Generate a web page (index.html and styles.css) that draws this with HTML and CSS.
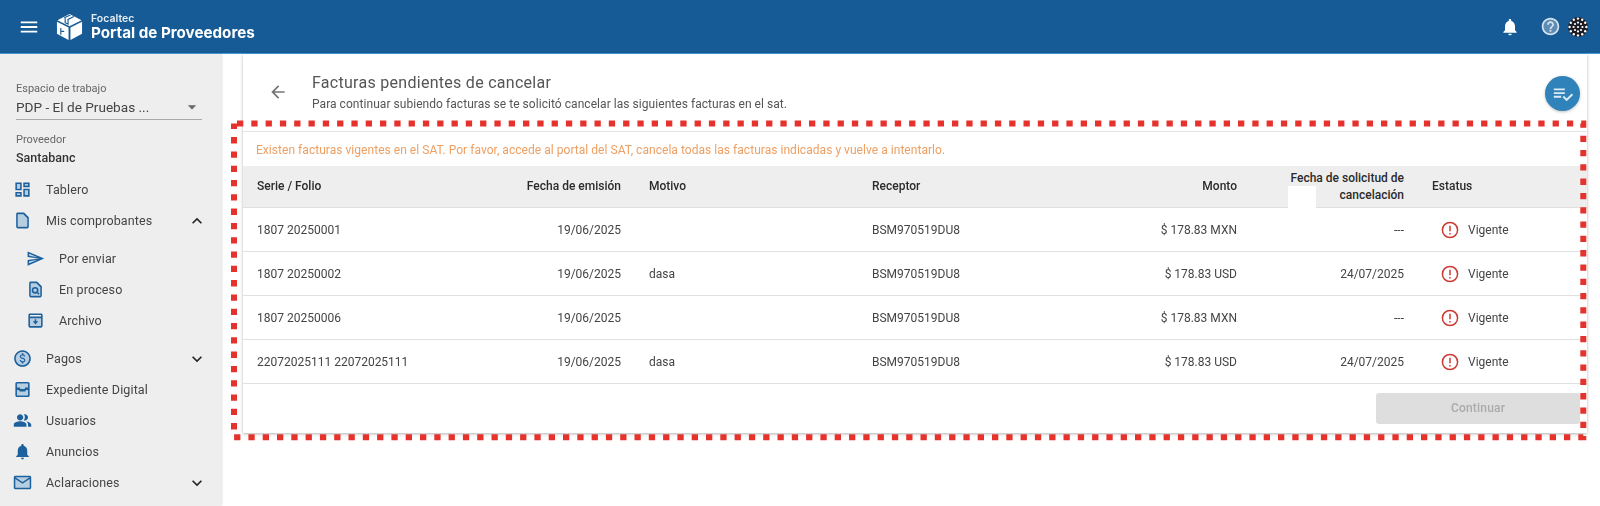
FILE: index.html
```html
<!DOCTYPE html>
<html lang="es">

<head>
    <meta charset="UTF-8">
    <title>Portal de Proveedores</title>
    <link rel="stylesheet" href="styles.css">
</head>

<body>
    <div class="page">
        <header class="topbar">
            <svg class="ico24 menuBtn" viewBox="0 0 24 24"><path d="M3 18h18v-2H3v2zm0-5h18v-2H3v2zm0-7v2h18V6H3z"/></svg>
            <svg class="cube" viewBox="0 0 28 28">
                <path d="M14 0.500 26.500 7 14 13.200 1.500 7z"/>
                <path d="M1 8.600 13 14.600V27.500L1 21z"/>
                <path d="M27 8.600 15 14.600V27.500L27 21z"/>
                <path class="cubeCut" d="M8.500 4.400 15 1.600M9.500 4.800v4.700l3 1.400V6.200l6-3"/>
                <path class="cubeCut" d="M5 15v7M5 18.500h3.500"/>
            </svg>
            <div class="brand">
                <span class="brandTop">Focaltec</span>
                <span class="brandName">Portal de Proveedores</span>
            </div>
            <div class="topIcons">
                <svg class="ico24 bell" viewBox="0 0 24 24"><path d="M12 22c1.100 0 2-.9 2-2h-4c0 1.100.9 2 2 2zm6-6v-5c0-3.070-1.630-5.640-4.500-6.320V4c0-.83-.67-1.500-1.500-1.500s-1.500.67-1.500 1.500v.68C7.640 5.360 6 7.920 6 11v5l-2 2v1h16v-1l-2-2z"/></svg>
                <svg class="ico24 help" viewBox="0 0 24 24"><circle class="helpFill" cx="12" cy="12" r="9"/><path d="M11 18h2v-2h-2v2zm1-16C6.480 2 2 6.480 2 12s4.480 10 10 10 10-4.480 10-10S17.520 2 12 2zm0 18c-4.410 0-8-3.590-8-8s3.590-8 8-8 8 3.590 8 8-3.590 8-8 8zm0-14c-2.210 0-4 1.790-4 4h2c0-1.100.9-2 2-2s2 .9 2 2c0 2-3 1.750-3 5h2c0-2.250 3-2.500 3-5 0-2.210-1.790-4-4-4z"/></svg>
                <svg class="avatar" viewBox="0 0 20 20">
                    <circle cx="10" cy="10" r="10" fill="#1c1c24"/>
                    <g fill="#fff">
                        <circle cx="10" cy="1.600" r="1.200"/><circle cx="14.200" cy="2.800" r="1.200"/><circle cx="17.200" cy="5.800" r="1.200"/><circle cx="18.400" cy="10" r="1.200"/><circle cx="17.200" cy="14.200" r="1.200"/><circle cx="14.200" cy="17.200" r="1.200"/><circle cx="10" cy="18.400" r="1.200"/><circle cx="5.800" cy="17.200" r="1.200"/><circle cx="2.800" cy="14.200" r="1.200"/><circle cx="1.600" cy="10" r="1.200"/><circle cx="2.800" cy="5.800" r="1.200"/><circle cx="5.800" cy="2.800" r="1.200"/>
                        <circle cx="7" cy="7" r="1.100"/><circle cx="10" cy="5.600" r="1.100"/><circle cx="13" cy="7" r="1.100"/><circle cx="14.400" cy="10" r="1.100"/><circle cx="13" cy="13" r="1.100"/><circle cx="10" cy="14.400" r="1.100"/><circle cx="7" cy="13" r="1.100"/><circle cx="5.600" cy="10" r="1.100"/><circle cx="10" cy="10" r="1.100"/>
                    </g>
                </svg>
            </div>
        </header>

        <div class="main">
            <aside class="sidebar">
                <div class="workspace">
                    <label class="fieldLabel">Espacio de trabajo</label>
                    <div class="selectBox">
                        <span>PDP - El de Pruebas ...</span>
                        <svg class="ico24 caret" viewBox="0 0 24 24"><path d="M7 10l5 5 5-5z"/></svg>
                    </div>
                    <label class="fieldLabel provLabel">Proveedor</label>
                    <div class="provName">Santabanc</div>
                </div>

                <ul class="nav">
                    <li>
                        <svg class="navIco" viewBox="0 0 24 24"><path class="tone" d="M5 5h4v6H5zM15 5h4v2h-4zM15 13h4v6h-4zM5 17h4v2H5z"/><path d="M19 5v2h-4V5h4M9 5v6H5V5h4m10 8v6h-4v-6h4M9 17v2H5v-2h4M21 3h-8v6h8V3zM11 3H3v10h8V3zm10 8h-8v10h8V11zm-10 4H3v6h8v-6z"/></svg>
                        <span>Tablero</span>
                    </li>
                    <li>
                        <svg class="navIco" viewBox="0 0 24 24"><path class="tone" d="M14 4H6v16h12V8z"/><path d="M14 2H6c-1.100 0-2 .9-2 2v16c0 1.100.9 2 2 2h12c1.100 0 2-.9 2-2V8l-6-6zm4 18H6V4h7l5 5v11z"/></svg>
                        <span>Mis comprobantes</span>
                        <svg class="ico24 chev" viewBox="0 0 24 24"><path d="M12 8l-6 6 1.410 1.410L12 10.830l4.590 4.580L18 14z"/></svg>
                    </li>
                    <li class="sub first">
                        <svg class="navIco" viewBox="0 0 24 24"><path class="tone" d="M4 7v3.500l9 1.500-9 1.500V17l14-5z"/><path d="M2.010 21 23 12 2.010 3 2 10l15 2-15 2zM4 6.100 17.900 12 4 17.900v-2.400l13.300-2.500v-2L4 8.500z"/></svg>
                        <span>Por enviar</span>
                    </li>
                    <li class="sub">
                        <svg class="navIco" viewBox="0 0 24 24"><path class="tone" d="M6 4h8l4 4v12H6z"/><path d="M14 2H6c-1.100 0-2 .9-2 2v16c0 1.100.9 2 2 2h12c1.100 0 2-.9 2-2V8l-6-6zm4 18H6V4h7l5 5v11z"/><circle class="ringLine" cx="11.500" cy="13" r="3.300"/><path class="ringLine" d="m14 15.500 2.500 2.500"/></svg>
                        <span>En proceso</span>
                    </li>
                    <li class="sub">
                        <svg class="navIco" viewBox="0 0 24 24"><path class="tone" d="M4 8h16v12H4z"/><path d="M5 3h14c1.100 0 2 .9 2 2v14c0 1.100-.9 2-2 2H5c-1.100 0-2-.9-2-2V5c0-1.100.9-2 2-2zm0 2v2h14V5H5zm0 4v10h14V9H5z"/><path d="M11 10.500h2V13h2.500L12 17l-3.500-4H11z"/></svg>
                        <span>Archivo</span>
                    </li>
                    <li class="gapTop">
                        <svg class="navIco" viewBox="0 0 24 24"><circle class="tone" cx="12" cy="12" r="10"/><path d="M12 1.500C6.200 1.500 1.500 6.200 1.500 12S6.200 22.500 12 22.500 22.500 17.800 22.500 12 17.800 1.500 12 1.500zm0 19c-4.700 0-8.500-3.800-8.500-8.500S7.300 3.500 12 3.500s8.500 3.800 8.500 8.500-3.800 8.500-8.500 8.500z"/><path d="M12.300 11c-1.700-.5-2.200-.9-2.200-1.600 0-.8.700-1.300 1.900-1.300s1.800.6 1.800 1.500h1.600c0-1.200-.8-2.300-2.300-2.700V5.500h-2v1.400c-1.400.3-2.500 1.200-2.500 2.600 0 1.700 1.400 2.500 3.400 3 1.800.4 2.200 1 2.200 1.700 0 .5-.4 1.300-2 1.300-1.500 0-2.100-.7-2.100-1.500H8.500c.1 1.600 1.300 2.500 2.600 2.800v1.400h2v-1.400c1.400-.3 2.500-1.100 2.500-2.600 0-2-1.700-2.700-3.300-3.200z"/></svg>
                        <span>Pagos</span>
                        <svg class="ico24 chev" viewBox="0 0 24 24"><path d="M16.590 8.590 12 13.170 7.410 8.590 6 10l6 6 6-6z"/></svg>
                    </li>
                    <li>
                        <svg class="navIco" viewBox="0 0 24 24"><path class="tone" d="M4 4h16v6H4zM4 14h16v6H4z"/><path d="M5 2.500h14c1.100 0 2 .9 2 2v15c0 1.100-.9 2-2 2H5c-1.100 0-2-.9-2-2v-15c0-1.100.9-2 2-2zm0 2v5h3.500l1 2h5l1-2H19v-5H5zm0 8v7h14v-7h-2.500l-1 2h-7l-1-2H5zM3 11h18v2H3z"/></svg>
                        <span>Expediente Digital</span>
                    </li>
                    <li>
                        <svg class="navIco" viewBox="0 0 24 24"><path d="M16.670 13.130C18.040 14.060 19 15.320 19 17v3h4v-3c0-2.180-3.570-3.470-6.330-3.870zM15 12c2.210 0 4-1.790 4-4s-1.790-4-4-4c-.47 0-.91.100-1.330.240C14.500 5.270 15 6.580 15 8s-.5 2.730-1.330 3.760c.42.140.86.240 1.330.240zM9 12c2.210 0 4-1.790 4-4s-1.790-4-4-4-4 1.790-4 4 1.790 4 4 4zM9 13c-2.670 0-8 1.340-8 4v3h16v-3c0-2.660-5.330-4-8-4z"/></svg>
                        <span>Usuarios</span>
                    </li>
                    <li>
                        <svg class="navIco" viewBox="0 0 24 24"><path d="M12 22c1.100 0 2-.9 2-2h-4c0 1.100.9 2 2 2zm6-6v-5c0-3.070-1.630-5.640-4.500-6.320V4c0-.83-.67-1.500-1.500-1.500s-1.500.67-1.500 1.500v.68C7.640 5.360 6 7.920 6 11v5l-2 2v1h16v-1l-2-2z"/></svg>
                        <span>Anuncios</span>
                    </li>
                    <li>
                        <svg class="navIco" viewBox="0 0 24 24"><path class="tone" d="M3 5h18v14H3z"/><path d="M21 3.500H3c-1.100 0-2 .9-2 2v13c0 1.100.9 2 2 2h18c1.100 0 2-.9 2-2v-13c0-1.100-.9-2-2-2zm0 15H3V7.500l9 6 9-6v11zm-9-7-9-6h18l-9 6z"/></svg>
                        <span>Aclaraciones</span>
                        <svg class="ico24 chev" viewBox="0 0 24 24"><path d="M16.590 8.590 12 13.170 7.410 8.590 6 10l6 6 6-6z"/></svg>
                    </li>
                </ul>
            </aside>

            <section class="content">
                <div class="card">
                    <div class="cardHead">
                        <svg class="ico24 backBtn" viewBox="0 0 24 24"><path d="M20 11H7.830l5.590-5.590L12 4l-8 8 8 8 1.410-1.410L7.830 13H20v-2z"/></svg>
                        <div class="headText">
                            <h1>Facturas pendientes de cancelar</h1>
                            <p>Para continuar subiendo facturas se te solicitó cancelar las siguientes facturas en el sat.</p>
                        </div>
                        <div class="fab">
                            <svg class="ico24" viewBox="0 0 24 24"><path d="M14 10H2v2h12v-2zm0-4H2v2h12V6zM2 16h8v-2H2v2zm19.500-4.500L23 13l-6.990 7-4.510-4.500L13 14l3.010 3 5.490-5.500z"/></svg>
                        </div>
                    </div>

                    <p class="warning">Existen facturas vigentes en el SAT. Por favor, accede al portal del SAT, cancela todas las facturas indicadas y vuelve a intentarlo.</p>

                    <table class="grid">
                        <colgroup>
                            <col class="c1"><col class="c2"><col class="c3"><col class="c4"><col class="c5"><col class="c6"><col>
                        </colgroup>
                        <thead>
                            <tr>
                                <th>Serie / Folio</th>
                                <th class="num">Fecha de emisión</th>
                                <th>Motivo</th>
                                <th>Receptor</th>
                                <th class="num">Monto</th>
                                <th class="num reqCol">Fecha de solicitud de<br>cancelación<i class="patch"></i></th>
                                <th>Estatus</th>
                            </tr>
                        </thead>
                        <tbody>
                            <tr>
                                <td>1807 20250001</td><td class="num">19/06/2025</td><td></td><td>BSM970519DU8</td><td class="num">$ 178.83 MXN</td><td class="num">---</td>
                                <td><div class="status"><svg class="alert" viewBox="0 0 18 18"><circle cx="9" cy="9" r="7.600"/><path d="M9 4.800v5.400M9 12v1.600"/></svg>Vigente</div></td>
                            </tr>
                            <tr>
                                <td>1807 20250002</td><td class="num">19/06/2025</td><td>dasa</td><td>BSM970519DU8</td><td class="num">$ 178.83 USD</td><td class="num">24/07/2025</td>
                                <td><div class="status"><svg class="alert" viewBox="0 0 18 18"><circle cx="9" cy="9" r="7.600"/><path d="M9 4.800v5.400M9 12v1.600"/></svg>Vigente</div></td>
                            </tr>
                            <tr>
                                <td>1807 20250006</td><td class="num">19/06/2025</td><td></td><td>BSM970519DU8</td><td class="num">$ 178.83 MXN</td><td class="num">---</td>
                                <td><div class="status"><svg class="alert" viewBox="0 0 18 18"><circle cx="9" cy="9" r="7.600"/><path d="M9 4.800v5.400M9 12v1.600"/></svg>Vigente</div></td>
                            </tr>
                            <tr>
                                <td>22072025111 22072025111</td><td class="num">19/06/2025</td><td>dasa</td><td>BSM970519DU8</td><td class="num">$ 178.83 USD</td><td class="num">24/07/2025</td>
                                <td><div class="status"><svg class="alert" viewBox="0 0 18 18"><circle cx="9" cy="9" r="7.600"/><path d="M9 4.800v5.400M9 12v1.600"/></svg>Vigente</div></td>
                            </tr>
                        </tbody>
                    </table>

                    <div class="cardFoot">
                        <button class="btnContinue" disabled>Continuar</button>
                    </div>
                </div>
            </section>
        </div>

        <!-- marco rojo encima de la captura -->
        <svg class="marker" viewBox="0 0 1600 506"><path d="M237 123.500H1583.300V437.300H234V123.500"/></svg>
    </div>
</body>

</html>
```

FILE: styles.css
```css
html,body,h1,p,ul,li,table,th,td{margin:0;padding:0;}
li{list-style:none;}
body{background:#fff;font-family:Roboto,"Liberation Sans",sans-serif;color:#444;}
.page{position:relative;width:1600px;height:506px;overflow:hidden;display:flex;flex-direction:column;}
.ico24{width:24px;height:24px;fill:currentColor;flex:none;}

/* barra superior */
.topbar{flex:none;height:53px;background:#165b95;border-bottom:1px solid #4b9ad2;display:flex;align-items:center;color:#fff;filter:blur(.35px);}
.menuBtn{width:22px;height:22px;margin-left:18px;}
.cube{width:27px;height:28px;margin-left:16px;fill:#fff;flex:none;}
.cubeCut{fill:none;stroke:#165b95;stroke-width:1.2;}
.brand{display:flex;flex-direction:column;margin-left:8px;font-family:Inter,"Open Sans",sans-serif;}
.brandTop{font-size:10.500px;font-weight:600;line-height:11px;color:#e6eef5;}
.brandName{font-size:15.200px;font-weight:700;line-height:17px;white-space:nowrap;}
.topIcons{margin-left:auto;margin-right:12px;display:flex;align-items:center;}
.bell{width:20px;height:20px;}
.help{width:21px;height:21px;margin-left:20px;color:#d5e2ee;}
.helpFill{fill:#5d8cb4;}
.avatar{width:20px;height:20px;margin-left:7px;}

.main{flex:1;display:flex;min-height:0;filter:blur(.35px);}

/* menu lateral */
.sidebar{flex:none;width:221px;background:#eee;box-shadow:1px 0 2px rgba(0,0,0,.12);padding-top:28px;box-sizing:border-box;}
.workspace{padding:0 19px 0 16px;}
.fieldLabel{display:block;font-size:11px;line-height:13px;color:#666;}
.selectBox{display:flex;align-items:center;justify-content:space-between;height:23px;padding-bottom:1px;border-bottom:1px solid #aaa;font-size:13.600px;color:#444;}
.selectBox span{white-space:nowrap;}
.caret{color:#666;width:20px;height:20px;}
.provLabel{margin-top:13px;}
.provName{margin-top:5px;font-size:12.500px;line-height:14px;font-weight:500;color:#333;}

.nav{margin-top:9.400px;}
.nav li{display:flex;align-items:center;height:31px;padding-left:13px;font-size:12.500px;color:#444;letter-spacing:.13px;}
.nav li>span{margin-left:14px;white-space:nowrap;}
.navIco{width:19px;height:19px;flex:none;fill:#1c619d;}
.navIco .tone{fill:#b7cde0;}
.ringLine{fill:none;stroke:#1c619d;stroke-width:2;}
.nav .chev{width:20px;height:20px;margin-left:auto;margin-right:14px;color:#222;}
.nav .sub{padding-left:26px;}
.nav .first{margin-top:7px;}
.nav .gapTop{margin-top:7px;}

/* contenido */
.content{flex:1;min-width:0;padding:0 13px 0 22px;}
.card{position:relative;background:#fff;box-shadow:0 1px 3px rgba(0,0,0,.3);}
.cardHead{height:78px;box-sizing:border-box;display:flex;border-bottom:1px solid #e4e4e4;padding:20px 0 0 25px;}
.backBtn{width:20px;height:20px;margin-top:8px;color:#757575;}
.headText{margin-left:24px;}
.headText h1{font-size:16px;line-height:18px;font-weight:400;color:#555;letter-spacing:.28px;}
.headText p{margin-top:5px;font-size:12px;line-height:14px;color:#555;letter-spacing:.05px;}
.fab{position:absolute;top:22px;right:7px;width:35px;height:35px;border-radius:50%;background:#2f82ba;color:#dcebf5;display:flex;align-items:center;justify-content:center;box-shadow:0 1px 3px rgba(0,0,0,.25);}
.fab .ico24{width:22px;height:22px;}
.warning{height:34px;box-sizing:border-box;padding:1px 0 0 13px;font-size:12px;line-height:34px;color:#ee9f62;letter-spacing:.04px;}

/* tabla */
.grid{width:1344px;table-layout:fixed;border-collapse:collapse;font-size:12px;}
.c1{width:200px;}
.c2{width:193px;}
.c3{width:223px;}
.c4{width:202px;}
.c5{width:191px;}
.c6{width:167px;}
.grid th{height:41px;background:#eee;font-weight:500;color:#2b2b2b;text-align:left;padding:1px 15px 0 13px;line-height:17px;border-bottom:1px solid #e0e0e0;box-sizing:border-box;}
.grid td{height:44px;padding:2px 15px 0 13px;border-bottom:1px solid #e0e0e0;box-sizing:border-box;white-space:nowrap;color:#444;}
.grid th:first-child,.grid td:first-child{padding-left:14px;}
.grid .num{text-align:right;}
.reqCol{position:relative;}
.patch{position:absolute;left:36px;bottom:-1px;width:28px;height:22px;background:#fff;}
.status{display:flex;align-items:center;padding-left:9px;}
.alert{width:18px;height:18px;margin-right:9px;fill:none;stroke:#cc3a35;stroke-width:1.500;}
.cardFoot{height:49px;box-sizing:border-box;padding:9px 7px 0 0;display:flex;justify-content:flex-end;align-items:flex-start;}
.btnContinue{width:204px;height:31px;border:0;border-radius:3px;background:#dedede;color:#aaa;font-family:inherit;font-size:12px;font-weight:500;letter-spacing:.2px;}

.marker{position:absolute;left:0;top:0;width:1600px;height:506px;pointer-events:none;}
.marker path{fill:none;stroke:#e5322d;stroke-width:6;stroke-dasharray:6.300 8;}
```
